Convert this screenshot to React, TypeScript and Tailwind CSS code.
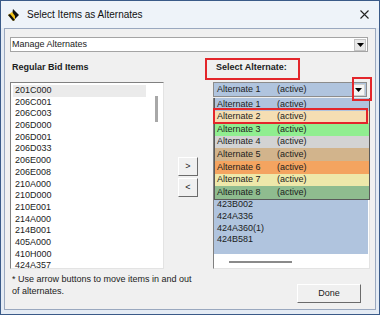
const regularItems = [
  "201C000", "206C001", "206C003", "206D000", "206D001", "206D033", "206E000", "206E008",
  "210A000", "210D000", "210E001", "214A000", "214B001", "405A000", "410H000", "424A357",
];

const alternates = [
  { name: "Alternate 1", color: "bg-[#b0c4de]" },
  { name: "Alternate 2", color: "bg-[#f5deb3]" },
  { name: "Alternate 3", color: "bg-[#90ee90]" },
  { name: "Alternate 4", color: "bg-[#d3d3d3]" },
  { name: "Alternate 5", color: "bg-[#d2b48c]" },
  { name: "Alternate 6", color: "bg-[#f4a460]" },
  { name: "Alternate 7", color: "bg-[#eee8aa]" },
  { name: "Alternate 8", color: "bg-[#8fbc8f]" },
];

// rows above these sit under the open dropdown, so only these show
const altItems = ["423B002", "424A336", "424A360(1)", "424B581"];

function ArrowBtn({ className }: { className: string }) {
  return (
    <div className={`flex items-center justify-center ${className}`}>
      <svg width="7" height="4" viewBox="0 0 7 4">
        <path d="M0 0h7L3.5 4z" fill="#000" />
      </svg>
    </div>
  );
}

function WinButton({ label, className }: { label: string; className: string }) {
  return (
    <div
      className={`flex items-center justify-center bg-[#f0f0f0] border border-t-white border-l-white border-r-[#6b6b6b] border-b-[#6b6b6b] text-[#222] ${className}`}
    >
      {label}
    </div>
  );
}

export default function App() {
  return (
    <div className="w-[380px] h-[315px] bg-[#e4ebf4] border border-[#3a5a88] flex flex-col font-['Liberation_Sans',Arial,sans-serif] text-[9px] text-[#1c1c1c] overflow-hidden">
      {/* title bar */}
      <div className="h-[27px] flex items-center pl-[6px] pr-[10px] bg-[#eef3f9]">
        <svg width="13" height="14" viewBox="0 0 13 14">
          <path d="M6 1l6 6-4 4-3-4z" fill="#111" />
          <path d="M1 7l4-3 3 4 0 4-2 1z" fill="#f2c318" />
          <path d="M1 7l5 6 2-1-5-6z" fill="#111" />
        </svg>
        <span className="ml-[7px] text-[10px] text-[#111]">Select Items as Alternates</span>
        <svg className="ml-auto" width="9" height="9" viewBox="0 0 9 9">
          <path d="M0.5 0.5l8 8M8.5 0.5l-8 8" stroke="#222" strokeWidth="1.1" />
        </svg>
      </div>

      {/* client area */}
      <div className="flex-1 mx-[3px] mb-[4px] bg-[#f0f0f0] border border-[#9aa8bf] pl-[5px] pt-[8px] flex flex-col">
        {/* top combo */}
        <div className="w-[358px] h-[15px] bg-white border border-[#a4a4a4] flex items-center">
          <span className="pl-[1px] text-[#222]">Manage Alternates</span>
          <ArrowBtn className="ml-auto mr-[1px] w-[12px] h-[12px] bg-[#e8e8e8] border border-[#c4c4c4]" />
        </div>

        {/* main row */}
        <div className="flex mt-[10px] w-[360px]">
          {/* left column */}
          <div className="w-[154px] flex flex-col">
            <div className="h-[11px] leading-[11px] pl-[2px] font-bold">Regular Bid Items</div>
            <div className="mt-[9px] h-[187px] bg-white border border-t-[#808080] border-l-[#808080] border-r-[#e3e3e3] border-b-[#e3e3e3] flex overflow-hidden">
              <div className="w-[135px] pl-[2px] pt-[2px] flex flex-col">
                {regularItems.map((it, i) => (
                  <div key={it} className={`h-[11.7px] shrink-0 leading-[11.7px] px-[2px] ${i === 0 ? "bg-[#ebebeb]" : ""}`}>
                    {it}
                  </div>
                ))}
              </div>
              <div className="flex-1 pt-[13px] pl-[9px]">
                <div className="w-[3px] h-[26px] bg-[#a8a8a8]" />
              </div>
            </div>
          </div>

          {/* middle buttons */}
          <div className="w-[49px] pt-[95px] pl-[14px] flex flex-col gap-[2px]">
            <WinButton label=">" className="w-[20px] h-[19px] text-[#3a4766]" />
            <WinButton label="<" className="w-[20px] h-[19px] text-[#3a4766]" />
          </div>

          {/* right column */}
          <div className="w-[157px] flex flex-col relative">
            <div className="h-[11px] leading-[11px] pl-[3px] font-bold">Select Alternate:</div>
            <div className="mt-[9px] relative">
              <div className="w-[154px] h-[15px] bg-[#b0c4de] border border-[#8c8c8c] flex items-center">
                <span className="pl-[3px] w-[63px]">Alternate 1</span>
                <span>(active)</span>
                <ArrowBtn className="ml-auto mr-[1px] w-[13px] h-[12px] bg-[#f4f4f4] border border-[#d0d0d0]" />
              </div>
              {/* dropdown list */}
              <div className="absolute top-[16px] left-[1px] w-[156px] border border-t-0 border-[#5a5a5a] z-10 flex flex-col">
                {alternates.map((a) => (
                  <div key={a.name} className={`h-[12.6px] flex items-center ${a.color}`}>
                    <span className="pl-[2px] w-[62px]">{a.name}</span>
                    <span>(active)</span>
                  </div>
                ))}
              </div>
            </div>
            <div className="mt-[1px] h-[171px] bg-white border border-t-[#808080] border-l-[#808080] border-r-[#e3e3e3] border-b-[#e3e3e3] flex flex-col overflow-hidden">
              <div className="flex-1 w-[154px] bg-[#b0c4de] flex flex-col justify-end pb-[8px] overflow-hidden">
                {altItems.map((it) => (
                  <div key={it} className="h-[11.7px] shrink-0 leading-[11.7px] pl-[3px]">
                    {it}
                  </div>
                ))}
              </div>
              <div className="h-[14px] pt-[7px] pl-[15px]">
                <div className="w-[63px] h-[2px] bg-[#8a8a8a]" />
              </div>
            </div>

            {/* annotation boxes */}
            <div className="absolute left-[-8px] top-[-4px] w-[95px] h-[22px] border-2 border-[#e3262b] z-20" />
            <div className="absolute left-[139px] top-[15px] w-[20px] h-[24px] border-2 border-[#e3262b] z-20" />
            <div className="absolute left-[0px] top-[46px] w-[155px] h-[16px] border-2 border-[#e3262b] z-20" />
          </div>
        </div>

        {/* footer */}
        <div className="flex w-[360px]">
          <div className="pt-[4px] pl-[2px] leading-[12px] text-[#222]">
            * Use arrow buttons to move items in and out
            <br />
            of alternates.
          </div>
          <WinButton label="Done" className="ml-auto mr-[9px] mt-[15px] w-[64px] h-[19px]" />
        </div>
      </div>
    </div>
  );
}
